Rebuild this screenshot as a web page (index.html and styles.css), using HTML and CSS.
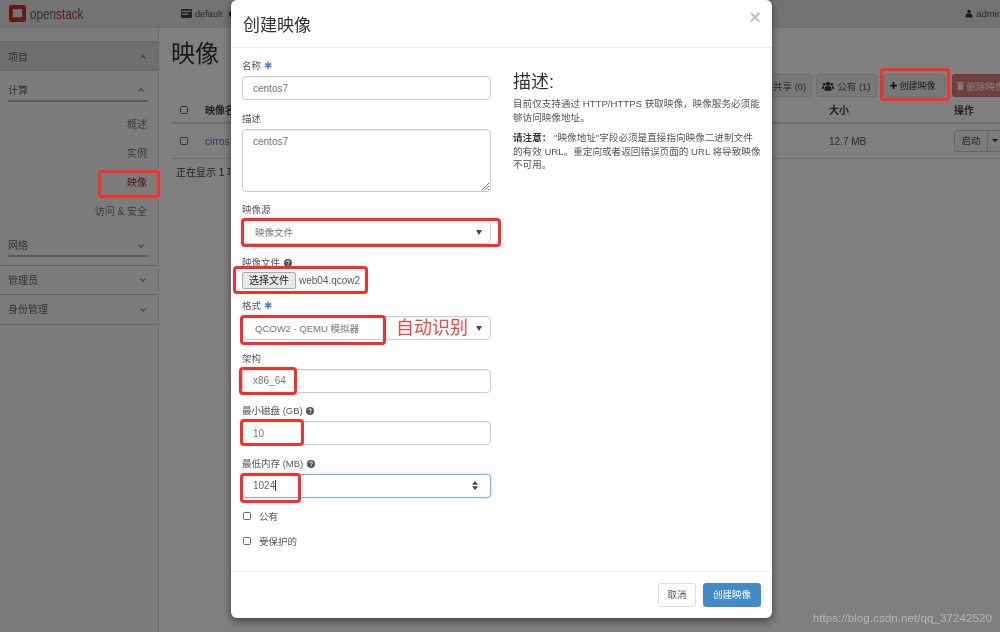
FILE: index.html
```html
<!DOCTYPE html>
<html lang="zh-CN">
<head>
<meta charset="utf-8">
<title>创建映像</title>
<link rel="stylesheet" href="styles.css">
</head>
<body>
<div class="page">
  <header class="topbar">
    <div class="logo">
      <svg class="logo-mark" viewBox="0 0 18 18" width="17" height="17"><rect width="18" height="18" rx="2.500" fill="#c9302c"/><rect x="4" y="4.500" width="10" height="8.500" fill="#e9e9e9"/></svg>
      <span class="logo-text">open<b>stack</b></span>
    </div>
    <div class="project">
      <svg class="ico-kb" viewBox="0 0 12 10" width="11" height="9"><rect width="12" height="10" rx="1" fill="#444"/><rect x="1" y="2" width="10" height="1.400" fill="#ddd"/><rect x="1" y="5" width="7" height="1.400" fill="#ddd"/></svg>
      <span>default</span>
      <i class="dot"></i>
    </div>
    <div class="user">
      <svg viewBox="0 0 12 12" width="8" height="9"><circle cx="6" cy="3" r="2.600" fill="#333"/><path d="M1 12V9c0-2 2-3 5-3s5 1 5 3v3z" fill="#333"/></svg>
      <span>admin</span>
    </div>
  </header>
  <div class="content">
    <nav class="sidebar">
      <div class="nav-top">项目<i class="chev up"></i></div>
      <div class="nav-sec">计算<i class="chev up"></i></div>
      <a class="nav-item">概述</a>
      <a class="nav-item">实例</a>
      <a class="nav-item active">映像</a>
      <a class="nav-item">访问 &amp; 安全</a>
      <div class="nav-sec net">网络<i class="chev"></i></div>
      <div class="nav-top plain">管理员<i class="chev"></i></div>
      <div class="nav-top plain">身份管理<i class="chev"></i></div>
    </nav>
    <main class="main">
      <h1 class="page-title">映像</h1>
      <div class="toolbar">
        <span class="btn">共享 (0)</span>
        <span class="btn">
          <svg viewBox="0 0 14 11" width="12" height="10"><circle cx="7" cy="3" r="2.400" fill="#333"/><circle cx="2.600" cy="3.600" r="1.700" fill="#333"/><circle cx="11.400" cy="3.600" r="1.700" fill="#333"/><path d="M3 11V8c0-1.600 1.600-2.400 4-2.400s4 .8 4 2.400v3zM0 9V7.400C0 6.200 1 5.600 2.400 5.600 2 6.500 2 7.500 2 9zM14 9V7.400C14 6.200 13 5.600 11.600 5.600 12 6.500 12 7.500 12 9z" fill="#333"/></svg>
          公有 (1)
        </span>
        <span class="btn create">
          <svg viewBox="0 0 8 8" width="7" height="7"><path d="M3 0h2v3h3v2H5v3H3V5H0V3h3z" fill="#222"/></svg>
          <span>创建映像</span>
        </span>
        <span class="btn danger">
          <svg viewBox="0 0 8 10" width="7" height="9"><path d="M0 1h8v1.400H0zM1 3h6v7H1z" fill="#fff"/></svg>
          删除映像
        </span>
      </div>
      <div class="row head">
        <span class="check"></span><span class="clip">映像名称</span><span class="size">大小</span><span>操作</span>
      </div>
      <div class="row">
        <span class="check"></span><span class="link clip">cirros</span><span class="size">12.7 MB</span>
        <span class="split"><span class="split-main">启动</span><span class="split-caret"></span></span>
      </div>
      <p class="count">正在显示 1 项</p>
    </main>
  </div>

  <div class="overlay">
    <div class="modal">
      <div class="modal-head">
        <h2>创建映像</h2>
        <span class="close">×</span>
      </div>
      <div class="modal-body">
        <form class="form">
          <div class="group">
            <label>名称 <em>✱</em></label>
            <div class="field">centos7</div>
          </div>
          <div class="group">
            <label>描述</label>
            <div class="field area">centos7
              <svg class="grip" viewBox="0 0 8 8" width="8" height="8"><path d="M8 1 1 8M8 4 4 8M8 7 7 8" stroke="#777" fill="none"/></svg>
            </div>
          </div>
          <div class="group">
            <label>映像源</label>
            <div class="field select"><span>映像文件</span><i class="tri"></i></div>
          </div>
          <div class="group file-group">
            <label>映像文件 <svg class="help" viewBox="0 0 10 10" width="8" height="8"><use href="#help"/></svg></label>
            <div class="file"><span class="file-btn">选择文件</span><span>web04.qcow2</span></div>
          </div>
          <div class="group">
            <label>格式 <em>✱</em></label>
            <div class="field select"><span>QCOW2 - QEMU 模拟器</span><i class="tri"></i></div>
          </div>
          <div class="group">
            <label>架构</label>
            <div class="field">x86_64</div>
          </div>
          <div class="group">
            <label>最小磁盘 (GB) <svg class="help" viewBox="0 0 10 10" width="8" height="8"><use href="#help"/></svg></label>
            <div class="field">10</div>
          </div>
          <div class="group">
            <label>最低内存 (MB) <svg class="help" viewBox="0 0 10 10" width="8" height="8"><use href="#help"/></svg></label>
            <div class="field focus"><span>1024<i class="caret"></i></span>
              <svg class="spin" viewBox="0 0 8 12" width="6" height="9"><path d="M4 0 8 5H0zM4 12 0 7h8z" fill="#444"/></svg>
            </div>
          </div>
          <div class="checkline first"><span class="check"></span>公有</div>
          <div class="checkline"><span class="check"></span>受保护的</div>
        </form>
        <aside class="help-col">
          <h3>描述:</h3>
          <p>目前仅支持通过 HTTP/HTTPS 获取映像&#xFF0C;映像服务必须能够访问映像地址。</p>
          <p><b>请注意&#xFF1A;</b> "映像地址"字段必须是直接指向映像二进制文件的有效 URL。重定向或者返回错误页面的 URL 将导致映像不可用。</p>
        </aside>
      </div>
      <div class="modal-foot">
        <span class="mbtn">取消</span>
        <span class="mbtn primary">创建映像</span>
      </div>
    </div>
    <div class="mark m-nav"></div>
    <div class="mark m-create"></div>
    <div class="mark m-source"></div>
    <div class="mark m-file"></div>
    <div class="mark m-format"></div>
    <div class="mark m-arch"></div>
    <div class="mark m-disk"></div>
    <div class="mark m-ram"></div>
    <span class="auto-note">自动识别</span>
    <span class="watermark">https://blog.csdn.net/qq_37242520</span>
  </div>
</div>
<svg class="defs" width="0" height="0"><defs><g id="help"><circle cx="5" cy="5" r="5" fill="#555"/><path d="M3.300 3.900C3.400 2.800 4.100 2.300 5.100 2.300c1 0 1.700.6 1.700 1.400 0 1.100-1.300 1.200-1.300 2.200" stroke="#fff" stroke-width="1.100" fill="none"/><rect x="4.500" y="6.700" width="1.200" height="1.200" fill="#fff"/></g></defs></svg>
</body>
</html>
```
FILE: styles.css
```css
* { box-sizing: border-box; }
html, body { margin: 0; padding: 0; height: 100%; }
body {
  font-family: "Liberation Sans", "Noto Sans CJK SC", sans-serif;
  font-size: 12px;
  color: #333;
  background: #fff;
  overflow: hidden;
}
.defs { display: block; height: 0; }
.page { position: relative; width: 1000px; height: 632px; overflow: hidden; filter: blur(0.45px); }

/* top bar */
.topbar {
  height: 28px;
  background: #e6e6e6;
  border-bottom: 1px solid #ddd;
  display: flex;
  align-items: center;
  padding-left: 9px;
  color: #555;
}
.logo { display: flex; align-items: center; gap: 4px; width: 172px; }
.logo-text { display: inline-block; font-size: 15px; color: #666; transform: scaleX(.78); transform-origin: left center; }
.logo-text b { font-weight: 400; color: #b83a36; }
.project { display: flex; align-items: center; gap: 3px; font-size: 9px; letter-spacing: .1px; }
.dot { width: 6px; height: 6px; margin-left: 3px; border-radius: 50%; background: #222; }
.user { margin-left: auto; display: flex; align-items: center; gap: 3px; font-size: 9.500px; margin-right: -2px; }

.content { display: flex; height: 604px; }

/* sidebar */
.sidebar {
  width: 159px;
  flex: none;
  padding-top: 13px;
  border-right: 1px solid #ddd;
  background: #f8f8f8;
  color: #666;
}
.nav-top, .nav-sec {
  display: flex;
  align-items: center;
  justify-content: space-between;
  padding: 0 10px 0 8px;
  font-size: 10px;
}
.nav-top { height: 30px; background: #dedede; border-top: 1px solid #ccc; border-bottom: 1px solid #ccc; }
.nav-top.plain { background: #f8f8f8; border-top: 0; padding-bottom: 2px; }
.nav-sec { height: 31px; margin: 0 10px 0 8px; padding: 7px 2px 0 0; border-bottom: 2px solid #b5b5b5; }
.nav-sec.net { height: 30px; margin-top: 1px; margin-bottom: 8px; }
.nav-sec.net + .nav-top { border-top: 1px solid #ccc; }
.chev {
  width: 4px; height: 4px;
  border-right: 1px solid #777; border-bottom: 1px solid #777;
  transform: rotate(45deg);
  margin-right: 3px;
}
.chev.up { transform: rotate(225deg); margin-top: 3px; }
.nav-item {
  display: block;
  height: 29px;
  line-height: 29px;
  text-align: right;
  padding-right: 11px;
  font-size: 10px;
  color: #777;
}
.nav-sec + .nav-item { margin-top: 8px; }
.nav-item.active { color: #b3262a; }

/* main */
.main { flex: 1; min-width: 0; padding: 0 0 0 12px; }
.page-title { margin: 10px 0 0; font-size: 24px; line-height: 32px; font-weight: 400; color: #333; }
.toolbar { display: flex; gap: 4px; margin: 4px 0 0 596px; white-space: nowrap; }
.btn {
  display: inline-flex; align-items: center; gap: 3px;
  height: 23px; padding: 0 5px;
  border: 1px solid #ddd; border-radius: 3px;
  background: #f2f2f2; font-size: 9.500px; color: #555;
  flex: none;
}
.btn.create { margin-left: 2px; color: #333; padding: 0 6px; margin-right: 3px; width: 62px; font-size: 9px; gap: 3px; }
.btn.danger { background: #d9534f; border-color: #d43f3a; color: #fff; opacity: .75; padding: 0 4px; }
.row {
  display: grid;
  grid-template-columns: 25px 624px 125px 60px;
  align-items: center;
  width: 840px;
  height: 35px;
  border-bottom: 1px solid #ddd;
  padding-left: 9px;
  font-size: 10px;
  color: #555;
}
.row.head { height: 27px; font-weight: 700; color: #444; border-bottom-width: 2px; }
.clip { justify-self: start; width: 26px; overflow: hidden; white-space: nowrap; }
.check { display: inline-block; width: 8px; height: 8px; border: 1px solid #666; border-radius: 1.500px; background: #fff; }
.link { color: #5c7d9a; }
.split { display: flex; height: 22px; width: 60px; border: 1px solid #ccc; border-radius: 3px; background: #f6f6f6; }
.split-main { width: 33px; line-height: 20px; text-align: center; font-size: 9.500px; border-right: 1px solid #ccc; }
.split-caret { margin: 8px 0 0 4px; border: 3px solid transparent; border-top-color: #333; height: 0; }
.count { margin: 5px 0 0 5px; font-size: 10px; color: #444; white-space: nowrap; width: 54px; overflow: hidden; }

/* overlay */
.overlay { position: absolute; inset: 0; background: rgba(0, 0, 0, .5); padding-left: 231px; }
.modal {
  width: 541px; height: 618px;
  background: #fff;
  border-radius: 6px;
  box-shadow: 0 3px 9px rgba(0, 0, 0, .5);
  display: flex; flex-direction: column;
}
.modal-head {
  height: 48px; flex: none;
  border-bottom: 1px solid #eee;
  display: flex; justify-content: space-between; align-items: center;
  padding: 0 11px 0 12px;
}
.modal-head h2 { margin: 0; font-size: 17px; font-weight: 400; color: #333; }
.close { font-size: 20px; font-weight: 700; color: #c4c4c4; margin-top: -12px; }
.modal-body { flex: 1; display: flex; padding: 9px 11px 0; }
.form { width: 249px; flex: none; }
.group { margin-bottom: 9.500px; }
.group label { display: block; height: 17px; line-height: 17px; margin-bottom: 2px; font-size: 9.500px; color: #555; white-space: nowrap; }
.group em { font-style: normal; color: #428bca; font-size: 10px; }
.help { vertical-align: -1px; margin-left: 1px; }
.field {
  position: relative;
  display: flex; align-items: center; justify-content: space-between;
  height: 24px; padding: 0 10px;
  background: #fff;
  border: 1px solid #ccc; border-radius: 4px;
  box-shadow: inset 0 1px 1px rgba(0,0,0,.06);
  font-size: 10px; color: #777;
}
.field.area { height: 63px; align-items: flex-start; padding-top: 6px; }
.grip { position: absolute; right: 1px; bottom: 1px; }
.field.select { padding: 0 8px 0 12px; font-size: 9.500px; }
.tri { border: 3.500px solid transparent; border-top: 5px solid #444; border-bottom: 0; }
.field.focus { border-color: #7cb3e6; box-shadow: 0 0 3px rgba(102,175,233,.5); padding-right: 12px; color: #666; }
.caret { display: inline-block; width: 1px; height: 11px; background: #333; vertical-align: -2px; }
.file-group { margin-bottom: 8.500px; }
.file-group label { margin-bottom: 1px; }
.file { display: flex; align-items: center; gap: 3px; height: 17px; font-size: 10px; color: #555; }
.file-btn {
  display: inline-block; width: 54px; height: 17px; line-height: 15px; text-align: center;
  background: #e8e8e8; border: 1px solid #aaa; border-radius: 2px; color: #222;
}
.checkline { display: flex; align-items: center; gap: 8px; height: 25px; padding-left: 1px; font-size: 9.500px; color: #555; }
.checkline.first { margin-top: -3.500px; }
.help-col { flex: 1; padding-left: 22px; font-size: 9.600px; line-height: 13.500px; color: #555; }
.help-col h3 { margin: 16px 0 6px; font-size: 18px; line-height: 18px; font-weight: 400; color: #333; }
.help-col p { margin: 0 0 7px; }
.help-col b { color: #333; }
.modal-foot {
  height: 47px; flex: none;
  border-top: 1px solid #eee;
  display: flex; justify-content: flex-end; gap: 7px;
  padding: 11px 11px 0 0;
}
.mbtn { height: 24px; line-height: 22px; width: 38px; text-align: center; border: 1px solid #ddd; border-radius: 3px; font-size: 9.500px; color: #555; background: #fff; }
.mbtn.primary { background: #428bca; border-color: #428bca; color: #fff; width: 58px; }

/* annotations */
.mark { position: absolute; border: 3px solid #f5302a; border-radius: 4px; }
.m-nav { left: 98px; top: 170px; width: 62px; height: 28px; }
.m-create { left: 880px; top: 68px; width: 70px; height: 33px; }
.m-source { left: 241px; top: 218px; width: 260px; height: 29px; }
.m-file { left: 233px; top: 266px; width: 135px; height: 28px; }
.m-format { left: 240px; top: 315px; width: 146px; height: 30px; }
.m-arch { left: 239px; top: 367px; width: 58px; height: 28px; }
.m-disk { left: 240px; top: 419px; width: 64px; height: 27px; }
.m-ram { left: 240px; top: 473px; width: 61px; height: 30px; }
.auto-note { position: absolute; left: 396px; top: 316px; font-size: 18px; line-height: 24px; color: #fb4040; }
.watermark { position: absolute; right: 8px; top: 610px; font-size: 11.700px; line-height: 16px; color: #b4b4b4; }
```
